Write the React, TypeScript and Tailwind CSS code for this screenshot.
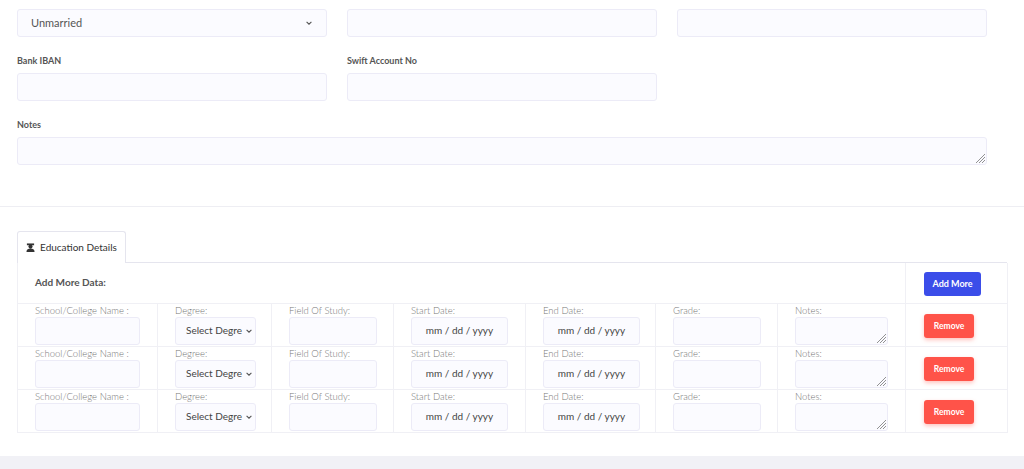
import React from "react";

const F = { fontFamily: "Lato, 'Open Sans', sans-serif" };
const inp = "h-[28px] bg-[#fbfbff] border border-[#ecebf7] rounded-[3px]";
const cols = [
  { w: 140, label: "School/College Name :", iw: 105, kind: "in" },
  { w: 114, label: "Degree:", iw: 81, kind: "sel" },
  { w: 122, label: "Field Of Study:", iw: 88, kind: "in" },
  { w: 132, label: "Start Date:", iw: 97, kind: "date" },
  { w: 130, label: "End Date:", iw: 97, kind: "date" },
  { w: 122, label: "Grade:", iw: 88, kind: "in" },
  { w: 128, label: "Notes:", iw: 93, kind: "ta" },
];

function Grip() {
  return (
    <svg width="9" height="9" viewBox="0 0 9 9" className="absolute right-[1px] bottom-[1px]">
      <path d="M9 0L0 9M9 3L3 9M9 6L6 9" stroke="#777" strokeWidth="0.8" />
    </svg>
  );
}

function Chevron() {
  return (
    <svg width="8" height="8" viewBox="0 0 10 10"><path d="M2 3.5l3 3 3-3" fill="none" stroke="#555" strokeWidth="1.4" /></svg>
  );
}

export default function App() {
  return (
    <div style={F} className="w-[1024px] h-[469px] bg-white overflow-hidden flex flex-col">
      <div className="px-[17px] pt-[9px]">
        <div className="flex gap-[20px]">
          <div className={`${inp} w-[310px] flex items-center justify-between px-[13px] text-[11px] text-[#555]`}>
            <span>Unmarried</span><Chevron />
          </div>
          <div className={`${inp} w-[310px]`} />
          <div className={`${inp} w-[310px]`} />
        </div>
        <div className="flex gap-[20px] mt-[16px]">
          {["Bank IBAN", "Swift Account No"].map((l) => (
            <div key={l} className="w-[310px]">
              <div className="text-[9px] font-bold text-[#555] h-[20px] leading-[16px]">{l}</div>
              <div className={`${inp} w-[310px]`} />
            </div>
          ))}
        </div>
        <div className="mt-[16px]">
          <div className="text-[9px] font-bold text-[#555] h-[20px] leading-[16px]">Notes</div>
          <div className={`${inp} w-[970px] relative`}><Grip /></div>
        </div>
      </div>
      <div className="mt-[41px] border-t border-[#eeeef3]" />
      <div className="px-[17px] pt-[24px] flex-1">
        <div className="flex">
          <div className="w-[109px] h-[32px] border border-[#e5e5ee] border-b-0 rounded-t-[3px] flex items-center justify-center gap-[5px] text-[10px] text-[#333] bg-white">
            <svg width="9" height="9" viewBox="0 0 10 10"><rect x="1" y="0.5" width="8" height="2" fill="#333" /><circle cx="5" cy="4" r="2.3" fill="#333" /><path d="M0.5 10c0-3 2-3.8 4.5-3.8s4.5 0.8 4.5 3.8z" fill="#333" /></svg>
            Education Details
          </div>
          <div className="flex-1 border-b border-[#e5e5ee]" />
        </div>
        <table className="border-collapse text-[#777]" style={{ tableLayout: "fixed", width: 990 }}>
          <colgroup>
            {cols.map((c, i) => <col key={i} style={{ width: c.w }} />)}
            <col style={{ width: 102 }} />
          </colgroup>
          <tbody>
            <tr className="h-[40px] border-b border-[#f0f0f5]">
              <td colSpan={7} className="pl-[17px] text-[10px] font-bold text-[#555] border-l border-[#f0f0f5]">Add More Data:</td>
              <td className="pl-[18px] border-l border-r border-[#f0f0f5]">
                <button className="h-[24px] w-[57px] bg-[#3b4de9] rounded-[3px] text-white text-[9px] font-bold">Add More</button>
              </td>
            </tr>
            {[0, 1, 2].map((r) => (
              <tr key={r} className="h-[43px] border-b border-[#f0f0f5]">
                {cols.map((c, i) => (
                  <td key={i} className="pl-[17px] align-top border-l border-[#f0f0f5] overflow-hidden">
                    <div className="text-[9.5px] leading-[13px] whitespace-nowrap font-light">{c.label}</div>
                    <div style={{ width: c.iw }} className={`${inp} relative flex items-center justify-center text-[10px] text-[#444] mb-[1px]`}>
                      {c.kind === "sel" && <span className="flex items-center gap-[3px] pl-[8px]">Select Degre <Chevron /></span>}
                      {c.kind === "date" && <span>mm / dd / yyyy</span>}
                      {c.kind === "ta" && <Grip />}
                    </div>
                  </td>
                ))}
                <td className="pl-[18px] border-l border-r border-[#f0f0f5]">
                  <button className="h-[24px] w-[50px] bg-[#ff5349] rounded-[3px] text-white text-[8.5px] font-bold shadow-[0_2px_4px_rgba(255,83,73,0.35)]">Remove</button>
                </td>
              </tr>
            ))}
          </tbody>
        </table>
      </div>
      <div className="h-[13px] bg-[#f1f1f6]" />
    </div>
  );
}
